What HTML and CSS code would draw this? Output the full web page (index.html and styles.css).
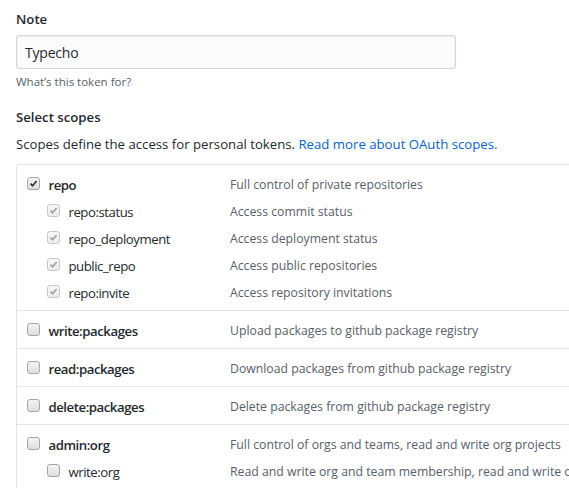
FILE: index.html
```html
<!DOCTYPE html>
<html>
<head>
<meta charset="utf-8">
<link rel="stylesheet" href="styles.css">
</head>
<body>
<div class="page">
  <div class="field">
    <label class="label" for="note">Note</label>
    <input id="note" class="input" type="text" value="Typecho">
    <p class="hint">What’s this token for?</p>
  </div>
  <h3 class="heading">Select scopes</h3>
  <p class="lead">Scopes define the access for personal tokens. <a class="link" href="#">Read more about OAuth scopes.</a></p>

  <div class="scopes">
    <div class="group">
      <div class="row top">
        <span class="name"><span class="cb checked"><svg viewBox="0 0 13 13"><path d="M3 6.6l2.4 2.6L10.2 3.6" /></svg></span><b>repo</b></span>
        <span class="desc">Full control of private repositories</span>
      </div>
      <div class="row sub">
        <span class="name"><span class="cb checked disabled"><svg viewBox="0 0 13 13"><path d="M3 6.6l2.4 2.6L10.2 3.6" /></svg></span>repo:status</span>
        <span class="desc">Access commit status</span>
      </div>
      <div class="row sub">
        <span class="name"><span class="cb checked disabled"><svg viewBox="0 0 13 13"><path d="M3 6.6l2.4 2.6L10.2 3.6" /></svg></span>repo_deployment</span>
        <span class="desc">Access deployment status</span>
      </div>
      <div class="row sub">
        <span class="name"><span class="cb checked disabled"><svg viewBox="0 0 13 13"><path d="M3 6.6l2.4 2.6L10.2 3.6" /></svg></span>public_repo</span>
        <span class="desc">Access public repositories</span>
      </div>
      <div class="row sub">
        <span class="name"><span class="cb checked disabled"><svg viewBox="0 0 13 13"><path d="M3 6.6l2.4 2.6L10.2 3.6" /></svg></span>repo:invite</span>
        <span class="desc">Access repository invitations</span>
      </div>
    </div>
    <div class="group">
      <div class="row top">
        <span class="name"><span class="cb"></span><b>write:packages</b></span>
        <span class="desc">Upload packages to github package registry</span>
      </div>
    </div>
    <div class="group">
      <div class="row top">
        <span class="name"><span class="cb"></span><b>read:packages</b></span>
        <span class="desc">Download packages from github package registry</span>
      </div>
    </div>
    <div class="group">
      <div class="row top">
        <span class="name"><span class="cb"></span><b>delete:packages</b></span>
        <span class="desc">Delete packages from github package registry</span>
      </div>
    </div>
    <div class="group">
      <div class="row top">
        <span class="name"><span class="cb"></span><b>admin:org</b></span>
        <span class="desc">Full control of orgs and teams, read and write org projects</span>
      </div>
      <div class="row sub">
        <span class="name"><span class="cb"></span>write:org</span>
        <span class="desc">Read and write org and team membership, read and write org projects</span>
      </div>
    </div>
  </div>
</div>
</body>
</html>
```
FILE: styles.css
```css
html, body {
  margin: 0;
  padding: 0;
  overflow: hidden;
  background: #fff;
}
body {
  font-family: "Open Sans", "Noto Sans", sans-serif;
  font-size: 13.2px;
  color: #24292e;
}
.page {
  padding: 9px 0 0 16px;
}
.field {
  display: flex;
  flex-direction: column;
  align-items: flex-start;
}
.label {
  font-weight: 600;
  line-height: 20px;
  margin-bottom: 6px;
}
.input {
  box-sizing: border-box;
  width: 440px;
  height: 34px;
  margin: 0;
  padding: 0 8px;
  font-family: inherit;
  font-size: 14px;
  letter-spacing: -0.2px;
  color: #24292e;
  background: #fafbfc;
  border: 1px solid #d1d5da;
  border-radius: 3px;
  box-shadow: inset 0 1px 2px rgba(27, 31, 35, 0.075);
  outline: none;
}
.hint {
  margin: 4px 0 0;
  font-size: 11.5px;
  line-height: 18px;
  color: #586069;
}
.heading {
  margin: 16px 0 0;
  font-size: 13.2px;
  font-weight: 600;
  line-height: 20px;
}
.lead {
  margin: 7px 0 0;
  line-height: 20px;
}
.link {
  color: #0366d6;
  text-decoration: none;
}
.scopes {
  margin-top: 10px;
  width: 700px;
  border: 1px solid #e1e4e8;
  border-radius: 3px;
}
.group {
  padding: 6px 10px 4px;
  border-bottom: 1px solid #e1e4e8;
}
.row {
  display: grid;
  grid-template-columns: 203px 1fr;
  height: 27px;
  align-items: center;
  white-space: nowrap;
}
.row.sub .name {
  padding-left: 20px;
}
.name {
  display: flex;
  align-items: center;
  gap: 8px;
  letter-spacing: -0.45px;
}
.name b {
  font-weight: 600;
}
.desc {
  font-size: 12.25px;
  color: #586069;
}
.cb {
  box-sizing: border-box;
  width: 13px;
  height: 13px;
  flex: none;
  margin-right: 0.45px;
  border: 1px solid #a6a6a6;
  border-radius: 3px;
  background: linear-gradient(#f4f4f4, #dedede);
  display: flex;
  position: relative;
  top: -1px;
}
.cb svg {
  width: 11px;
  height: 11px;
  fill: none;
  stroke: #333;
  stroke-width: 2;
}
.cb.disabled {
  border-color: #c8c8c8;
  background: linear-gradient(#f8f8f8, #ececec);
}
.cb.disabled svg {
  stroke: #9f9f9f;
}
```
